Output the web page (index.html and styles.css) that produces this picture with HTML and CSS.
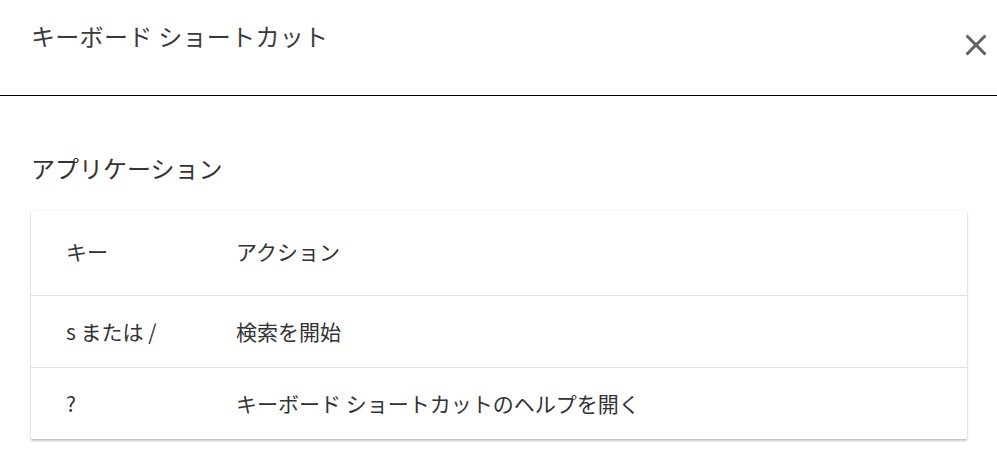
FILE: index.html
```html
<!DOCTYPE html>
<html lang="ja">
<head>
    <meta charset="UTF-8">
    <meta name="viewport" content="width=device-width, initial-scale=1.0">
    <title>キーボード ショートカット</title>
    <link rel="stylesheet" href="styles.css">
</head>
<body>

    <!-- Dialog header -->
    <div class="dialog-header">
        <h2 class="dialog-title">キーボード ショートカット</h2>
        <button class="close-btn" aria-label="閉じる">
            <svg viewBox="0 0 24 24" width="36" height="36">
                <path d="M19 6.41L17.59 5 12 10.59 6.41 5 5 6.41 10.59 12 5 17.59 6.41 19 12 13.41 17.59 19 19 17.59 13.41 12z"/>
            </svg>
        </button>
    </div>

    <!-- Shortcut section -->
    <div class="dialog-content">
        <h3 class="section-title">アプリケーション</h3>
        <table class="shortcut-table">
            <thead>
                <tr>
                    <th class="col-key">キー</th>
                    <th>アクション</th>
                </tr>
            </thead>
            <tbody>
                <tr>
                    <td class="col-key">s または /</td>
                    <td>検索を開始</td>
                </tr>
                <tr>
                    <td class="col-key">?</td>
                    <td>キーボード ショートカットのヘルプを開く</td>
                </tr>
            </tbody>
        </table>
    </div>

</body>
</html>
```

FILE: styles.css
```css
body {
    margin: 0;
    min-height: 476px;
    font-family: "Noto Sans CJK JP", "Noto Sans", sans-serif;
    color: #333;
    background: #fff;
}

.dialog-header {
    height: 95px;
    border-bottom: 1px solid #000;
    display: flex;
    justify-content: space-between;
    padding: 0 3px 0 31px;
}

.dialog-title {
    margin: 0;
    padding-top: 18px;
    font-size: 24px;
    font-weight: normal;
    line-height: 36px;
    letter-spacing: 0.3px;
    color: #3a3a3a;
}

.close-btn {
    align-self: center;
    margin-top: -6px;
    background: none;
    border: none;
    padding: 0;
    cursor: pointer;
    fill: #5f6368;
    display: flex;
}

.dialog-content {
    padding: 0 30px 37px 31px;
}

.section-title {
    margin: 54px 0 25px;
    font-size: 24px;
    font-weight: normal;
    line-height: 36px;
    color: #333;
}

.shortcut-table {
    width: 100%;
    border-collapse: collapse;
    background: #fff;
    box-shadow: 0 2px 2px rgba(0, 0, 0, 0.22), 0 0 2px rgba(0, 0, 0, 0.1);
    font-size: 21px;
}

.shortcut-table th,
.shortcut-table td {
    text-align: left;
    font-weight: normal;
    padding: 0;
    color: #333;
}

.shortcut-table thead tr {
    height: 84px;
}

.shortcut-table thead th {
    padding-bottom: 4px;
}

.shortcut-table tbody tr {
    height: 72px;
    border-top: 1px solid #e0e0e0;
}

.col-key {
    width: 170px;
    padding-left: 35px !important;
}
```
